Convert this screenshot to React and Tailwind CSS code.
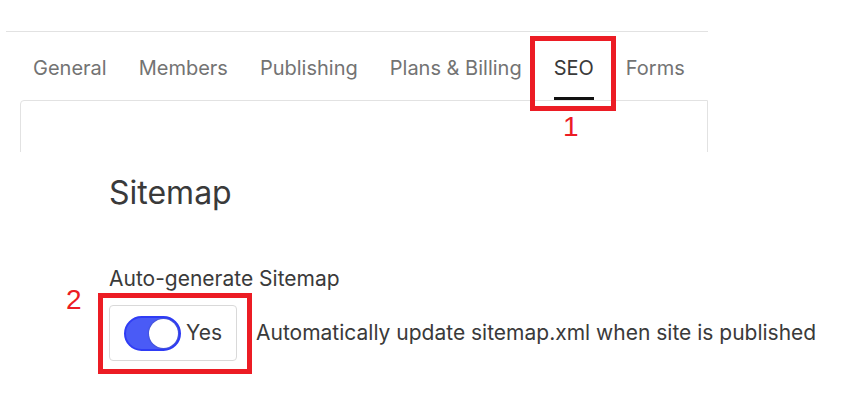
import React from "react";

const tabs = ["General", "Members", "Publishing", "Plans & Billing", "SEO", "Forms"];

const Tabs = () => {
  return (
    <div className="w-[708px] h-[152px] overflow-hidden bg-white pt-[31px]">
      <div className="ml-[6px] border-t border-[#e2e2e2]">
        <div className="flex h-[68px] pl-[11px]">
          {tabs.map((t) => {
            const active = t === "SEO";
            return (
              <div key={t} className="relative flex items-center px-4 pt-[4px]">
                <span className={active ? "text-[20px] leading-[30px] text-[#3a3a3a]" : "text-[20px] leading-[30px] text-[#737373]"}>{t}</span>
                {active && <div className="absolute bottom-0 left-4 right-4 h-[3px] bg-[#111111]" />}
              </div>
            );
          })}
        </div>
      </div>
      <div className="ml-[20px] h-[80px] border border-[#e2e2e2] rounded-tl-[4px]" />
    </div>
  );
};

const Toggle = () => {
  return (
    <div className="flex items-center w-[128px] h-[56px] border border-[#d9d9d9] rounded-[4px] pl-[14px]">
      <div className="flex items-center justify-end w-[57px] h-[35px] rounded-full bg-[#4a5bf6] border-2 border-[#2f3cf5] pr-[1px]">
        <div className="w-[29px] h-[29px] rounded-full bg-white shadow-[0_0_2px_rgba(0,0,0,0.35)]" />
      </div>
      <span className="ml-[5px] text-[21px] text-[#3a3a3a]">Yes</span>
    </div>
  );
};

export default function App() {
  return (
    <div className="relative w-[844px] h-[410px] bg-white overflow-hidden font-['Inter',sans-serif]">
      <Tabs />
      <div className="pl-[109px] pt-[17px]">
        <h2 className="text-[32px] leading-[48px] text-[#3a3a3a]">Sitemap</h2>
        <div className="mt-[50px] text-[21px] leading-[24px] text-[#3a3a3a]">Auto-generate Sitemap</div>
        <div className="mt-[14px] flex items-center">
          <Toggle />
          <span className="ml-[19px] text-[21px] text-[#3a3a3a]">
            Automatically update sitemap.xml when site is published
          </span>
        </div>
      </div>

      {/* annotation 1 */}
      <div className="absolute left-[530px] top-[36px] w-[86px] h-[75px] border-[5px] border-[#ec1c24]" />
      <div className="absolute left-[563px] top-[110px] text-[28px] leading-[34px] text-[#ec1c24] font-['Liberation_Sans',sans-serif]">1</div>

      {/* annotation 2 */}
      <div className="absolute left-[98px] top-[293px] w-[154px] h-[81px] border-[5px] border-[#ec1c24]" />
      <div className="absolute left-[66px] top-[283px] text-[28px] leading-[34px] text-[#ec1c24] font-['Liberation_Sans',sans-serif]">2</div>
    </div>
  );
}
